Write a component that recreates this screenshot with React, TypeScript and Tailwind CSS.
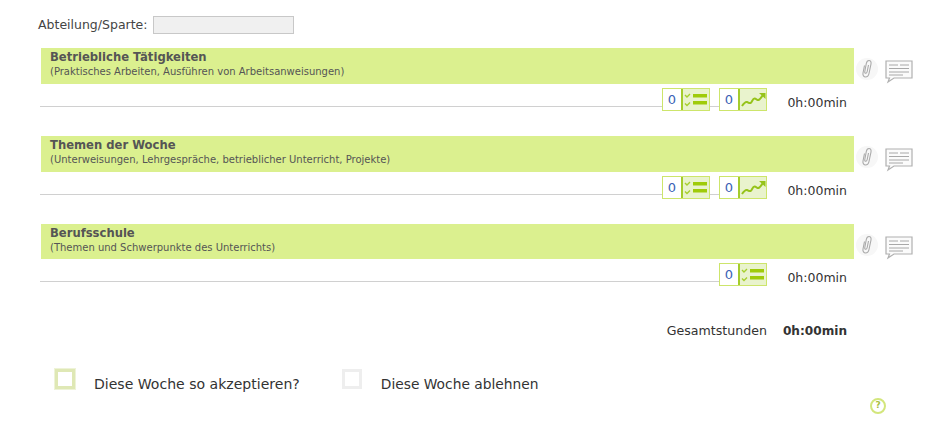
import React from "react";

const dejavu = "font-['DejaVu_Sans',sans-serif]";

const ChecklistIcon = () => (
  <svg width="25" height="17" viewBox="0 0 25 17" fill="none">
    <path d="M1 4l2 2 3-3M1 12.500l2 2 3-3" stroke="#a6cf2e" strokeWidth="1.400" />
    <rect x="9" y="3" width="14" height="3.500" fill="#9fcb0a" />
    <rect x="9" y="10" width="14" height="3.500" fill="#9fcb0a" />
  </svg>
);

const TrendIcon = () => (
  <svg width="25" height="17" viewBox="0 0 25 17" fill="none">
    <path d="M1 15c2-3 3.500-4.500 5-4s2 1.500 3.500 1 2-4.500 4-4.500 2.500 2 4 1.500 2.500-2 4-4.500" stroke="#96c31a" strokeWidth="2" />
    <path d="M18 2h6.500v6z" fill="#96c31a" />
  </svg>
);

const CounterBox = ({ icon }: { icon: React.ReactNode }) => (
  <div className="flex h-[23px] w-[48px] shrink-0 border border-[#cde56b] bg-white">
    <div className="flex w-5 items-center justify-center border-r-2 border-[#a4cc2c] text-[13px] text-[#3b62b5]">
      0
    </div>
    <div className="flex flex-1 items-center justify-center bg-[#e9f3cd]">{icon}</div>
  </div>
);

const PaperclipIcon = () => (
  <div className="flex h-[22px] w-[22px] items-center justify-center rounded-full bg-[#f7f7f7]">
    <svg width="12" height="20" viewBox="0 0 12 20" fill="none">
      <path
        d="M3.500 6.500L2 14c-.5 2.500 1 4 2.500 4s3-1 3.500-3.500l2-9.500c.4-2-.4-3.500-2-3.500S5.700 2.500 5.300 4.500L3.800 12.500c-.2 1 .1 1.800.9 1.800s1.300-.8 1.500-1.800l1.300-6.500"
        stroke="#a9a9a9"
        strokeWidth="1.100"
      />
    </svg>
  </div>
);

const CommentIcon = () => (
  <svg className="mt-[2px]" width="28" height="24" viewBox="0 0 28 24" fill="none">
    <path d="M1 1h26v17H9l-6 4 1.500-4H1z" fill="#fbfbfb" stroke="#b0b0b0" strokeWidth="1.200" />
    <path d="M4 5h9M15 5h9M4 8.500h20M4 12h20M4 15h14" stroke="#a8a8a8" strokeWidth="1" />
  </svg>
);

interface SectionProps {
  title: string;
  subtitle: string;
  showTrend?: boolean;
  barHeight?: string;
}

const Section = ({ title, subtitle, showTrend = true, barHeight = "h-9" }: SectionProps) => (
  <section className="h-[88px]">
    <div className="flex items-start">
      <div className={`${barHeight} ml-[41px] w-[813px] bg-[#dbf08f] pl-[9px] pt-[1px] text-[#555]`}>
        <div className="text-[11.600px] font-bold leading-[16px]">{title}</div>
        <div className="text-[10px] leading-[14px]">{subtitle}</div>
      </div>
      <div className="ml-[2px] mt-[10px] flex h-[22px] items-start gap-[7px]">
        <PaperclipIcon />
        <CommentIcon />
      </div>
    </div>
    <div className="ml-10 mt-1 flex w-[807px] items-end">
      <div className="mb-1 h-px flex-1 bg-[#d0d0d0]" />
      <CounterBox icon={<ChecklistIcon />} />
      {showTrend && (
        <>
          <div className="mb-1 h-px w-[9px] bg-[#d0d0d0]" />
          <CounterBox icon={<TrendIcon />} />
        </>
      )}
      <div className="-mb-[2px] w-[80px] text-right text-[12.500px] text-[#333]">0h:00min</div>
    </div>
  </section>
);

export default function App() {
  return (
    <div className={`${dejavu} h-[443px] w-[952px] overflow-hidden bg-white text-[#333]`}>
      <div className="flex h-[48px] items-start pl-[38px] pt-[16px]">
        <span className="text-[12.500px] leading-[18px] text-[#444]">Abteilung/Sparte:</span>
        <div className="ml-[5px] h-[18px] w-[141px] border border-[#c8c8c8] bg-[#f0f0f0]" />
      </div>

      <Section
        title="Betriebliche Tätigkeiten"
        subtitle="(Praktisches Arbeiten, Ausführen von Arbeitsanweisungen)"
      />
      <Section
        title="Themen der Woche"
        subtitle="(Unterweisungen, Lehrgespräche, betrieblicher Unterricht, Projekte)"
      />
      <Section
        title="Berufsschule"
        subtitle="(Themen und Schwerpunkte des Unterrichts)"
        showTrend={false}
        barHeight="h-[35px]"
      />

      <div className="mt-[10px] flex w-[847px] items-center justify-end">
        <span className="text-[12.600px] text-[#333]">Gesamtstunden</span>
        <span className="ml-4 text-[12.100px] font-bold text-[#333]">0h:00min</span>
      </div>

      <div className="mt-[28px] flex items-start pl-[55px]">
        <div className="h-5 w-5 border-[3px] border-[#dfe8b5] bg-white shadow-[0_0_0_1px_#eef3d8]" />
        <span className="ml-[19px] mt-[6px] text-[14.050px] leading-[18px] text-[#333]">
          Diese Woche so akzeptieren?
        </span>
        <div className="ml-[42px] h-5 w-5 border-[3px] border-[#eeeeee] bg-white" />
        <span className="ml-[19px] mt-[6px] text-[13.800px] leading-[18px] text-[#333]">
          Diese Woche ablehnen
        </span>
      </div>

      <div className="ml-[870px] mt-[5px] flex h-4 w-4 items-center justify-center rounded-full border-2 border-[#d3e67c] text-[9px] font-bold text-[#a8c040]">
        ?
      </div>
    </div>
  );
}
